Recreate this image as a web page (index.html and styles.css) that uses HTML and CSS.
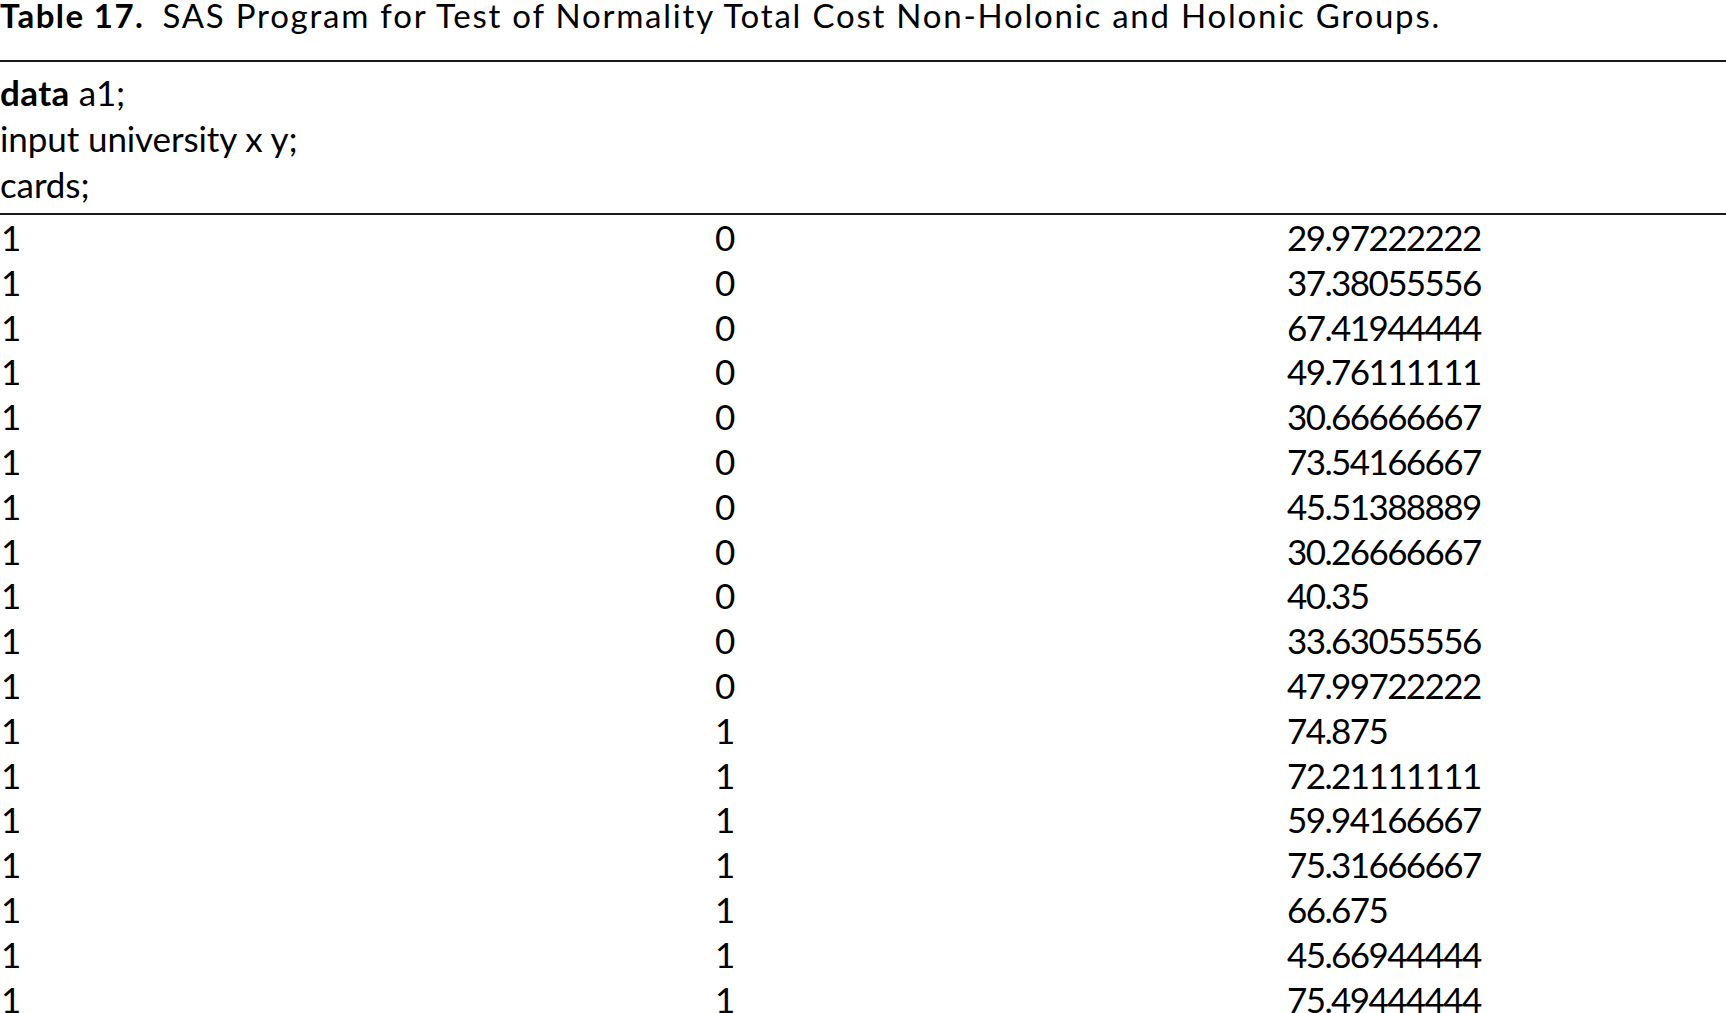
FILE: index.html
```html
<!DOCTYPE html>
<html lang="en">
<head>
<meta charset="utf-8">
<title>Table 17. SAS Program for Test of Normality</title>
<link rel="stylesheet" href="styles.css">
</head>
<body>
<div class="page">
  <p class="caption"><span class="label">Table 17.</span>&ensp;SAS Program for Test of Normality Total Cost Non-Holonic and Holonic Groups.</p>
  <table class="sas">
    <colgroup>
      <col class="c1">
      <col class="c2">
      <col class="c3">
    </colgroup>
    <thead>
      <tr class="first"><td colspan="3"><b>data</b> a1;</td></tr>
      <tr><td colspan="3">input university x y;</td></tr>
      <tr class="last"><td colspan="3">cards;</td></tr>
    </thead>
    <tbody>
      <tr class="first"><td>1</td><td>0</td><td>29.97222222</td></tr>
      <tr><td>1</td><td>0</td><td>37.38055556</td></tr>
      <tr><td>1</td><td>0</td><td>67.41944444</td></tr>
      <tr><td>1</td><td>0</td><td>49.76111111</td></tr>
      <tr><td>1</td><td>0</td><td>30.66666667</td></tr>
      <tr><td>1</td><td>0</td><td>73.54166667</td></tr>
      <tr><td>1</td><td>0</td><td>45.51388889</td></tr>
      <tr><td>1</td><td>0</td><td>30.26666667</td></tr>
      <tr><td>1</td><td>0</td><td>40.35</td></tr>
      <tr><td>1</td><td>0</td><td>33.63055556</td></tr>
      <tr><td>1</td><td>0</td><td>47.99722222</td></tr>
      <tr><td>1</td><td>1</td><td>74.875</td></tr>
      <tr><td>1</td><td>1</td><td>72.21111111</td></tr>
      <tr><td>1</td><td>1</td><td>59.94166667</td></tr>
      <tr><td>1</td><td>1</td><td>75.31666667</td></tr>
      <tr><td>1</td><td>1</td><td>66.675</td></tr>
      <tr><td>1</td><td>1</td><td>45.66944444</td></tr>
      <tr><td>1</td><td>1</td><td>75.49444444</td></tr>
    </tbody>
  </table>
</div>
</body>
</html>
```
FILE: styles.css
```css
html, body {
  margin: 0;
  padding: 0;
  background: #ffffff;
}

body {
  font-family: "Lato", "Open Sans", sans-serif;
  color: #000000;
  overflow: hidden;
}

.page {
  width: 1726px;
}

.caption {
  margin: 0 0 30px 0;
  font-size: 33px;
  line-height: 30px;
  letter-spacing: 1.78px;
  white-space: nowrap;
}

.caption .label {
  font-weight: 700;
  letter-spacing: 1.4px;
}

.sas {
  width: 100%;
  border-collapse: collapse;
  border-spacing: 0;
  border-top: 2px solid #1a1a1a;
  font-size: 35px;
}

.sas col.c1 { width: 715px; }
.sas col.c2 { width: 572px; }

.sas td {
  padding: 0;
  vertical-align: top;
  white-space: nowrap;
}

.sas thead td {
  line-height: 46px;
  letter-spacing: -0.1px;
}

.sas thead tr.first td {
  padding-top: 7px;
}

.sas thead tr.first b {
  letter-spacing: 0.4px;
}

.sas thead tr.last td {
  padding-bottom: 6px;
  border-bottom: 2px solid #1a1a1a;
}

.sas tbody td {
  line-height: 44.8px;
  letter-spacing: -1.6px;
}

.sas tbody td:first-child {
  padding-left: 1px;
}

.sas thead b {
  font-weight: 700;
}
```
